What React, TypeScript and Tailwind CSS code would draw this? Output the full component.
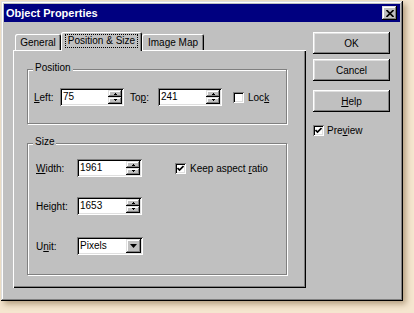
import React from "react";

const RAISED =
  "shadow-[inset_-1px_-1px_#000,inset_1px_1px_#fff,inset_-2px_-2px_#808080,inset_2px_2px_#dfdfdf]";
const SUNKEN =
  "shadow-[inset_1px_1px_#808080,inset_-1px_-1px_#fff,inset_2px_2px_#000,inset_-2px_-2px_#dfdfdf]";
const SMALL_RAISED =
  "shadow-[inset_-1px_-1px_#000,inset_1px_1px_#dfdfdf,inset_-2px_-2px_#808080,inset_2px_2px_#fff]";

function U({ children }: { children: React.ReactNode }) {
  return <span className="underline underline-offset-[1px]">{children}</span>;
}

function TinyArrow({ down }: { down?: boolean }) {
  return (
    <svg width="5" height="3" viewBox="0 0 5 3" className="block">
      {down ? (
        <>
          <rect x="1" y="0" width="3" height="1" fill="#000" />
          <rect x="2" y="1" width="1" height="1" fill="#000" />
        </>
      ) : (
        <>
          <rect x="2" y="1" width="1" height="1" fill="#000" />
          <rect x="1" y="2" width="3" height="1" fill="#000" />
        </>
      )}
    </svg>
  );
}

function SpinField({ value, className }: { value: string; className: string }) {
  return (
    <div className={`flex items-center h-[18px] bg-white pl-[3px] pr-[2px] ${SUNKEN} ${className}`}>
      <span className="flex-1 leading-none">{value}</span>
      <div className="flex flex-col w-[14px] h-[14px]">
        <div className={`flex-1 bg-[#c0c0c0] flex items-center justify-center ${SMALL_RAISED}`}>
          <TinyArrow />
        </div>
        <div className={`flex-1 bg-[#c0c0c0] flex items-center justify-center ${SMALL_RAISED}`}>
          <TinyArrow down />
        </div>
      </div>
    </div>
  );
}

function CheckBox({ checked }: { checked?: boolean }) {
  return (
    <div className={`w-[11px] h-[11px] bg-white flex items-center justify-center ${SUNKEN}`}>
      {checked && (
        <svg width="7" height="7" viewBox="0 0 7 7" className="block">
          <path d="M0.5 3 L2.5 5 L6.5 1" stroke="#000" strokeWidth="1.7" fill="none" />
        </svg>
      )}
    </div>
  );
}

function Button({ children, className }: { children: React.ReactNode; className?: string }) {
  return (
    <div
      className={`w-[77px] h-[22px] bg-[#c0c0c0] flex items-center justify-center ${RAISED} ${className ?? ""}`}
    >
      {children}
    </div>
  );
}

export default function App() {
  return (
    <div
      className="w-[414px] h-[313px] bg-[#f5e6cf] pl-[1px] pt-[1px] text-[10px] text-black"
      style={{ fontFamily: '"Liberation Sans", Arial, sans-serif' }}
    >
      <div
        className={`w-[402px] h-[300px] bg-[#c0c0c0] p-[3px] flex flex-col shadow-[inset_-1px_-1px_#000,inset_1px_1px_#dfdfdf,inset_-2px_-2px_#808080,inset_2px_2px_#fff,3px_3px_6px_rgba(100,70,30,0.45)]`}
      >
        {/* Title bar */}
        <div className="h-[18px] bg-[#000080] flex items-center justify-between pl-[2px] pr-[3px]">
          <span className="text-white font-bold text-[11px] leading-none">Object Properties</span>
          <div className={`w-[15px] h-[14px] bg-[#c0c0c0] flex items-center justify-center ${SMALL_RAISED}`}>
            <svg width="8" height="7" viewBox="0 0 8 7" className="block">
              <path d="M0.5 0 L7.5 7 M7.5 0 L0.5 7" stroke="#000" strokeWidth="1.6" />
            </svg>
          </div>
        </div>

        {/* Body */}
        <div className="flex pl-[9px] pt-[10px] gap-[7px]">
          {/* Left column: tabs + panel */}
          <div className="w-[293px] flex flex-col">
            <div className="flex items-end h-[18px] pl-[2px]">
              <div className="w-[46px] h-[16px] bg-[#c0c0c0] rounded-t-[2px] flex items-center justify-center shadow-[inset_1px_1px_#fff,inset_-1px_0_#000,inset_-2px_0_#808080]">
                General
              </div>
              <div className="relative z-10 w-[81px] h-[19px] -mb-px bg-[#c0c0c0] rounded-t-[2px] flex items-start justify-center pt-[2px] shadow-[inset_1px_1px_#fff,inset_-1px_0_#000,inset_-2px_0_#808080]">
                <span className="border border-dotted border-black px-[2px] leading-[12px]">Position &amp; Size</span>
              </div>
              <div className="w-[62px] h-[16px] bg-[#c0c0c0] rounded-t-[2px] flex items-center justify-center shadow-[inset_1px_1px_#fff,inset_-1px_0_#000,inset_-2px_0_#808080]">
                Image Map
              </div>
            </div>
            <div className="h-[238px] bg-[#c0c0c0] pl-[14px] pt-[19px] shadow-[inset_1px_1px_#fff,inset_-1px_-1px_#000,inset_-2px_-2px_#808080]">
              {/* Position group */}
              <div className="relative w-[260px] h-[55px] border border-[#808080] shadow-[inset_1px_1px_#fff,1px_1px_#fff] pl-[6px] pt-[18px]">
                <span className="absolute -top-[8px] left-[5px] bg-[#c0c0c0] px-[2px] leading-[12px]">
                  Position
                </span>
                <div className="flex items-center h-[18px]">
                  <span className="w-[26px]">
                    <U>L</U>eft:
                  </span>
                  <SpinField value="75" className="w-[64px]" />
                  <span className="w-[28px] ml-[6px]">
                    To<U>p</U>:
                  </span>
                  <SpinField value="241" className="w-[64px]" />
                  <div className="ml-[11px]">
                    <CheckBox />
                  </div>
                  <span className="ml-[4px]">
                    Loc<U>k</U>
                  </span>
                </div>
              </div>

              {/* Size group */}
              <div className="relative mt-[19px] w-[260px] h-[132px] border border-[#808080] shadow-[inset_1px_1px_#fff,1px_1px_#fff] pl-[8px] pt-[15px]">
                <span className="absolute -top-[8px] left-[5px] bg-[#c0c0c0] px-[2px] leading-[12px]">
                  Size
                </span>
                <div className="flex items-center h-[18px]">
                  <span className="w-[41px]">
                    <U>W</U>idth:
                  </span>
                  <SpinField value="1961" className="w-[65px]" />
                  <div className="ml-[33px]">
                    <CheckBox checked />
                  </div>
                  <span className="ml-[4px]">
                    Keep aspect <U>r</U>atio
                  </span>
                </div>
                <div className="flex items-center h-[18px] mt-[20px]">
                  <span className="w-[41px]">
                    Hei<U>g</U>ht:
                  </span>
                  <SpinField value="1653" className="w-[65px]" />
                </div>
                <div className="flex items-center h-[18px] mt-[22px]">
                  <span className="w-[41px]">
                    U<U>n</U>it:
                  </span>
                  <div className={`w-[66px] h-[18px] bg-white flex items-center pl-[3px] pr-[2px] ${SUNKEN}`}>
                    <span className="flex-1 leading-none">Pixels</span>
                    <div className={`w-[15px] h-[14px] bg-[#c0c0c0] flex items-center justify-center ${SMALL_RAISED}`}>
                      <svg width="7" height="4" viewBox="0 0 7 4" className="block">
                        <path d="M0 0 H7 L3.5 4 Z" fill="#000" />
                      </svg>
                    </div>
                  </div>
                </div>
              </div>
            </div>
          </div>

          {/* Right column: buttons */}
          <div className="flex flex-col w-[77px]">
            <Button className="shadow-[inset_-1px_-1px_#000,inset_1px_1px_#000,inset_-2px_-2px_#000,inset_2px_2px_#fff,inset_-3px_-3px_#808080,inset_3px_3px_#dfdfdf]">
              OK
            </Button>
            <Button className="mt-[5px]">Cancel</Button>
            <Button className="mt-[9px]">
              <U>H</U>elp
            </Button>
            <div className="flex items-center mt-[11px]">
              <CheckBox checked />
              <span className="ml-[3px]">
                Pre<U>v</U>iew
              </span>
            </div>
          </div>
        </div>
      </div>
    </div>
  );
}
